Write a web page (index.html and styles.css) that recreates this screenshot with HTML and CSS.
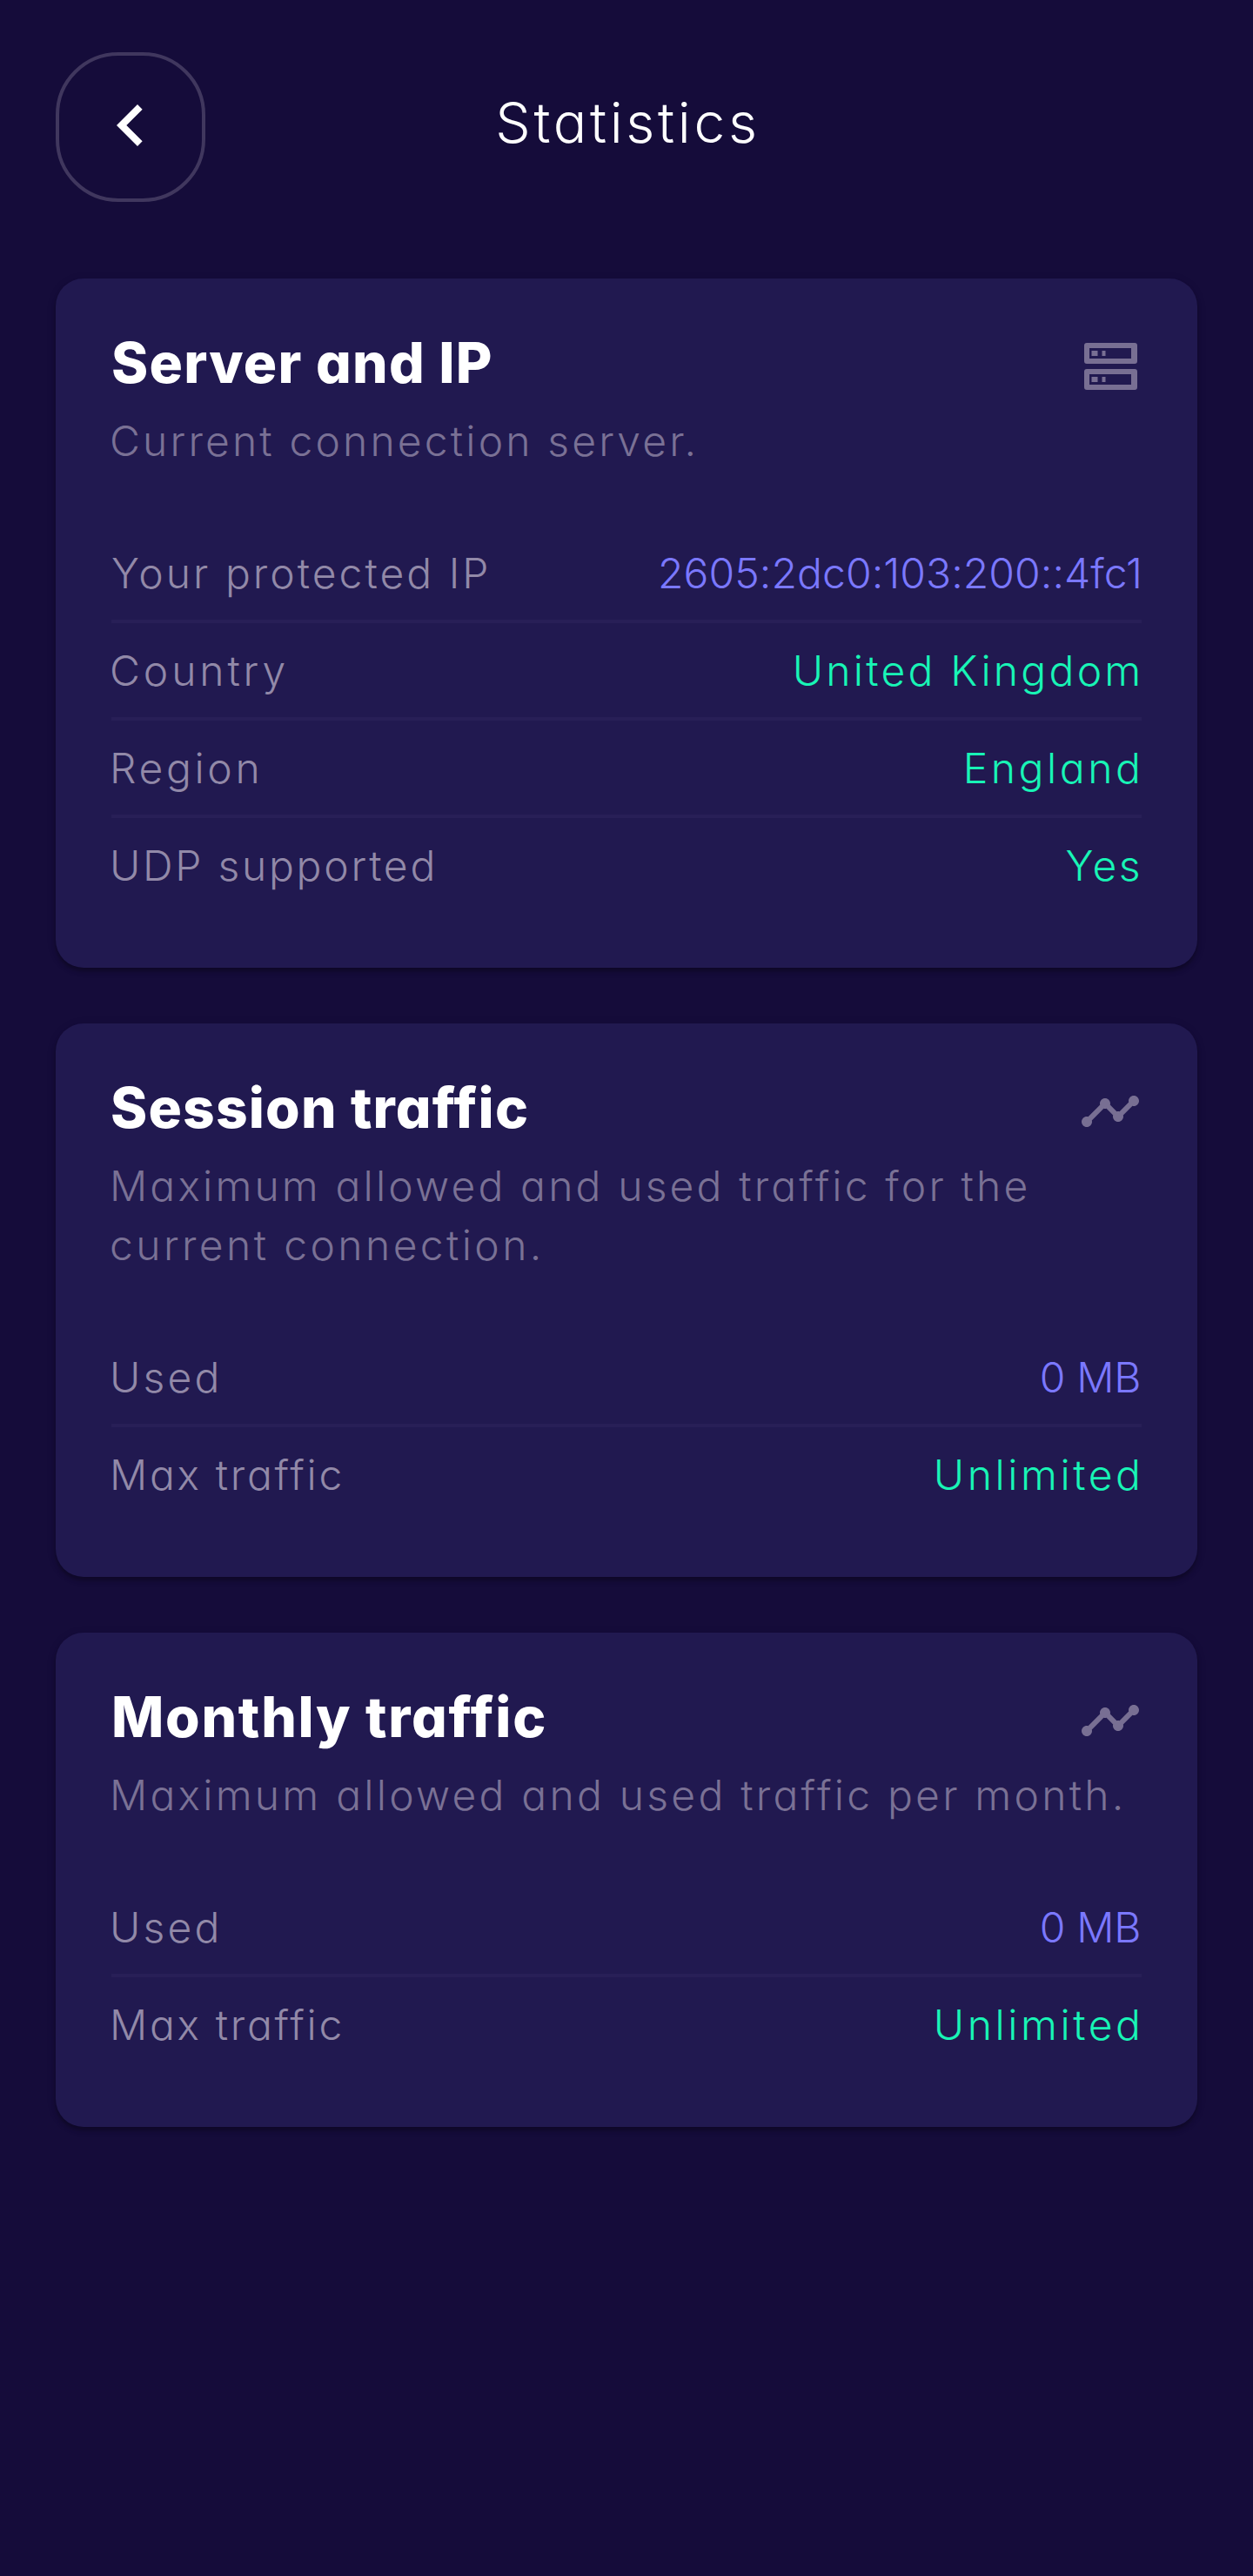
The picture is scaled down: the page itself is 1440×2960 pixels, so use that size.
FILE: index.html
```html
<!DOCTYPE html>
<html lang="en">
<head>
<meta charset="utf-8">
<title>Statistics</title>
<link rel="stylesheet" href="styles.css">
</head>
<body>
<header class="topbar">
  <button class="back" aria-label="Back">
    <svg class="back-icon" viewBox="0 0 24 24"><path d="M15.41 7.41 14 6l-6 6 6 6 1.41-1.41L10.83 12z"/></svg>
  </button>
  <h1 class="page-title">Statistics</h1>
</header>
<main class="cards">
  <section class="card">
    <div class="card-head">
      <h2 class="card-title t-server">Server and IP</h2>
      <svg class="card-icon" viewBox="0 0 72 72">
        <path fill-rule="evenodd" d="M9 9h55a3 3 0 0 1 3 3v18a3 3 0 0 1-3 3H9a3 3 0 0 1-3-3V12a3 3 0 0 1 3-3zm3 6v12h48V15z"/>
        <path fill-rule="evenodd" d="M9 39h55a3 3 0 0 1 3 3v18a3 3 0 0 1-3 3H9a3 3 0 0 1-3-3V42a3 3 0 0 1 3-3zm3 6v12h48V45z"/>
        <path d="M14.5 18h7v6h-7zM26.5 18h4v6h-4zM14.5 48h7v6h-7zM26.5 48h4v6h-4z"/>
      </svg>
    </div>
    <p class="card-sub">Current connection server.</p>
    <dl class="rows">
      <div class="row"><dt class="l-ip">Your protected IP</dt><dd class="accent v-ip">2605:2dc0:103:200::4fc1</dd></div>
      <div class="row"><dt class="l-country">Country</dt><dd class="v-country">United Kingdom</dd></div>
      <div class="row"><dt class="l-region">Region</dt><dd class="v-region">England</dd></div>
      <div class="row"><dt class="l-udp">UDP supported</dt><dd class="v-udp">Yes</dd></div>
    </dl>
  </section>
  <section class="card">
    <div class="card-head">
      <h2 class="card-title t-session">Session traffic</h2>
      <svg class="card-icon" viewBox="0 0 24 24"><path d="M23 8c0 1.1-.9 2-2 2-.18 0-.35-.02-.51-.07l-3.56 3.55c.05.16.07.34.07.52 0 1.1-.9 2-2 2s-2-.9-2-2c0-.18.02-.36.07-.52l-2.55-2.55c-.16.05-.34.07-.52.07s-.36-.02-.52-.07l-4.55 4.56c.05.16.07.33.07.51 0 1.1-.9 2-2 2s-2-.9-2-2 .9-2 2-2c.18 0 .35.02.51.07l4.56-4.55C8.02 9.36 8 9.18 8 9c0-1.1.9-2 2-2s2 .9 2 2c0 .18-.02.36-.07.52l2.55 2.55c.16-.05.34-.07.52-.07s.36.02.52.07l3.55-3.56C19.02 8.35 19 8.18 19 8c0-1.1.9-2 2-2s2 .9 2 2z"/></svg>
    </div>
    <p class="card-sub">Maximum allowed and used traffic for the<br><span class="sub-tail">current connection.</span></p>
    <dl class="rows">
      <div class="row"><dt class="l-used">Used</dt><dd class="accent v-used">0 MB</dd></div>
      <div class="row"><dt class="l-max">Max traffic</dt><dd class="v-max">Unlimited</dd></div>
    </dl>
  </section>
  <section class="card">
    <div class="card-head">
      <h2 class="card-title t-monthly">Monthly traffic</h2>
      <svg class="card-icon" viewBox="0 0 24 24"><path d="M23 8c0 1.1-.9 2-2 2-.18 0-.35-.02-.51-.07l-3.56 3.55c.05.16.07.34.07.52 0 1.1-.9 2-2 2s-2-.9-2-2c0-.18.02-.36.07-.52l-2.55-2.55c-.16.05-.34.07-.52.07s-.36-.02-.52-.07l-4.55 4.56c.05.16.07.33.07.51 0 1.1-.9 2-2 2s-2-.9-2-2 .9-2 2-2c.18 0 .35.02.51.07l4.56-4.55C8.02 9.36 8 9.18 8 9c0-1.1.9-2 2-2s2 .9 2 2c0 .18-.02.36-.07.52l2.55 2.55c.16-.05.34-.07.52-.07s.36.02.52.07l3.55-3.56C19.02 8.35 19 8.18 19 8c0-1.1.9-2 2-2s2 .9 2 2z"/></svg>
    </div>
    <p class="card-sub sub-monthly">Maximum allowed and used traffic per month.</p>
    <dl class="rows">
      <div class="row"><dt class="l-used">Used</dt><dd class="accent v-used">0 MB</dd></div>
      <div class="row"><dt class="l-max">Max traffic</dt><dd class="v-max">Unlimited</dd></div>
    </dl>
  </section>
</main>
</body>
</html>
```
FILE: styles.css
```css
* { box-sizing: border-box; margin: 0; padding: 0; }

body {
  min-height: 2960px;
  padding: 60px 64px 0;
  background: #150c3a;
  color: #fff;
  font-family: Inter, "Open Sans", sans-serif;
  font-feature-settings: "cv11";
  font-weight: 300;
}

.topbar {
  display: grid;
  grid-template-columns: 172px 1fr 172px;
  height: 172px;
  margin-bottom: 88px;
}

.back {
  display: flex;
  align-items: center;
  justify-content: center;
  width: 172px;
  height: 172px;
  padding-bottom: 4px;
  border: 4px solid #40375e;
  border-radius: 72px;
  background: none;
}
.back-icon { width: 96px; height: 96px; fill: #fff; }

.page-title {
  padding-left: 3px;
  font-size: 64px;
  font-weight: 300;
  line-height: 162px;
  letter-spacing: 3.7px;
  text-align: center;
}

.cards { display: flex; flex-direction: column; gap: 64px; }

.card {
  padding: 64px;
  border-radius: 32px;
  background: #211950;
  box-shadow: 0 4px 5px rgba(0, 0, 0, .3), 0 2px 14px rgba(0, 0, 0, .06);
}

.card-head { display: flex; justify-content: space-between; height: 72px; }
.card-title {
  font-size: 64px;
  font-weight: 800;
  line-height: 66px;
  white-space: nowrap;
}
.t-server { letter-spacing: 1.25px; }
.t-session { margin-left: -1px; letter-spacing: 1.18px; }
.t-monthly { letter-spacing: 1.7px; }
.card-icon { width: 72px; height: 72px; margin-top: 1px; fill: #786f93; }

.card-sub {
  margin: 17px -20px 63px -2px;
  color: #7a7195;
  font-size: 48px;
  line-height: 68px;
  letter-spacing: 3.15px;
  white-space: nowrap;
}
.sub-tail { letter-spacing: 3.39px; }
.sub-monthly { letter-spacing: 3.23px; }

.row {
  display: flex;
  align-items: center;
  justify-content: space-between;
  height: 108px;
  padding-top: 1px;
  font-size: 48px;
  line-height: 68px;
  white-space: nowrap;
}
.row + .row {
  height: 112px;
  border-top: 4px solid #281f57;
}
.row dt { margin-left: -2px; color: #9289a8; }
.row dd { margin-right: -2.5px; color: #18f5b6; }
.row dd.accent { color: #7b78ff; }

.row .l-ip { margin-left: 0; letter-spacing: 3.03px; }
.l-country { letter-spacing: 3.87px; }
.l-region { letter-spacing: 3.64px; }
.l-udp { letter-spacing: 2.74px; }
.l-used { letter-spacing: 3.16px; }
.l-max { letter-spacing: 2.68px; }
.row .v-ip { margin-right: -1px; letter-spacing: .08px; }
.v-country { letter-spacing: 3.25px; }
.v-region { letter-spacing: 3.55px; }
.row .v-udp { margin-right: -1px; letter-spacing: 2.5px; }
.row .v-used { margin-right: 1px; letter-spacing: -.34px; }
.v-max { letter-spacing: 3.55px; }
```
